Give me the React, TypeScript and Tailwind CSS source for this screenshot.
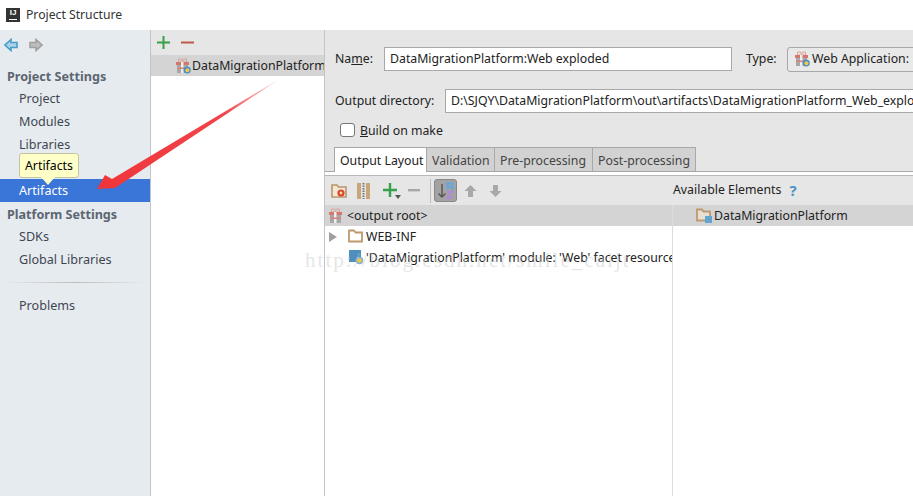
import { ReactNode } from "react";

function GiftIcon({ badge = false }: { badge?: boolean }) {
  return (
    <svg width="16" height="16" viewBox="0 0 16 16" className="shrink-0">
      <path d="M3.5 1h3l1 2.5 1-2.5h3v3h-8z" fill="none" stroke="#d9a49c" strokeWidth="1" />
      <rect x="1" y="4" width="13" height="3" fill="#d4776c" />
      <rect x="2" y="7" width="11" height="8" fill="#a8a8a8" />
      <rect x="6" y="4" width="2.5" height="11" fill="#eeeeee" />
      <rect x="2" y="9.5" width="11" height="1.5" fill="#d8827a" />
      {badge && <circle cx="12.2" cy="12" r="3.6" fill="#4a90c8" />}
      {badge && <circle cx="12.4" cy="12.2" r="2" fill="#f4c842" />}
    </svg>
  );
}

function FolderIcon({ filled = false }: { filled?: boolean }) {
  return (
    <svg width="16" height="15" viewBox="0 0 16 15" className="shrink-0">
      <path d="M1 1.5h5l1.5 2H14v9H1z" fill={filled ? "#e6dfd3" : "#fff"} stroke="#bd9a6e" strokeWidth="1.8" />
      {filled && <rect x="9" y="8" width="7" height="7" fill="#62a3cf" />}
    </svg>
  );
}

function NavItem({ children, active = false }: { children: ReactNode; active?: boolean }) {
  return (
    <div className={`h-[23px] pl-[19px] leading-[23px] ${active ? "bg-[#3a75d8] text-white" : "text-[#3f4650]"}`}>
      {children}
    </div>
  );
}

function Tab({ children, active = false, width }: { children: ReactNode; active?: boolean; width: string }) {
  return (
    <div
      className={`h-[25px] shrink-0 border border-[#a8a8a8] pl-[5px] leading-[26px] ${width} ${
        active ? "relative z-10 border-b-0 bg-white text-[#222]" : "-ml-px bg-[#d2d2d2] text-[#444]"
      }`}
    >
      {children}
    </div>
  );
}

export default function App() {
  return (
    <div className="relative h-[496px] w-[913px] overflow-hidden bg-white font-['Noto_Sans','Open_Sans',sans-serif] text-[12.3px] text-[#222]">
      {/* title bar */}
      <div className="flex h-[30px] items-center gap-[6px] pl-[6px] text-[#333]">
        <div className="flex h-[14px] w-[14px] flex-col items-center bg-[#333] font-['Liberation_Sans',sans-serif] text-[8px] font-bold leading-[10px] text-white">
          IJ
          <div className="mt-[1px] h-px w-[8px] bg-white" />
        </div>
        <span className="text-[12.2px]">Project Structure</span>
      </div>

      <div className="flex h-[466px]">
        {/* sidebar */}
        <div className="w-[151px] shrink-0 border-r border-[#c4c4c4] bg-[#e6ebf0] text-[12.6px]">
          <div className="flex h-[30px] items-center gap-[11px] pl-[4px]">
            <svg width="14" height="14" viewBox="0 0 14 14">
              <path d="M7 1.5 1 7l6 5.5V9.5h6v-5H7z" fill="#a9d3ea" stroke="#4b9ac6" strokeWidth="1.6" />
            </svg>
            <svg width="14" height="14" viewBox="0 0 14 14">
              <path d="M7 1.5 13 7l-6 5.5V9.5H1v-5h6z" fill="#bdbdbd" stroke="#a0a0a0" strokeWidth="1.6" />
            </svg>
          </div>
          <div className="h-[24px] pl-[7px] font-bold leading-[33px] text-[#5c6670]">Project Settings</div>
          <div className="h-[3px]" />
          <NavItem>Project</NavItem>
          <NavItem>Modules</NavItem>
          <NavItem>Libraries</NavItem>
          <div className="h-[23px]" />
          <NavItem active>Artifacts</NavItem>
          <div className="h-[23px] pl-[7px] font-bold leading-[25px] text-[#5c6670]">Platform Settings</div>
          <NavItem>SDKs</NavItem>
          <NavItem>Global Libraries</NavItem>
          <div className="mx-[4px] mt-[11px] mb-[11px] h-px bg-gradient-to-r from-[#e6ebf0] via-[#bcbcbc] to-[#e6ebf0]" />
          <NavItem>Problems</NavItem>
        </div>

        {/* artifact list */}
        <div className="w-[174px] shrink-0 border-r border-[#c4c4c4] bg-white">
          <div className="flex h-[25px] items-center gap-[11px] bg-[#e6e6e6] pl-[6px]">
            <svg width="13" height="13" viewBox="0 0 13 13">
              <path d="M6.5 0v13M0 6.5h13" stroke="#37a04a" strokeWidth="2" />
            </svg>
            <svg width="13" height="13" viewBox="0 0 13 13">
              <path d="M0 6.5h13" stroke="#c0584c" strokeWidth="2" />
            </svg>
          </div>
          <div className="flex h-[21px] items-center gap-[1px] overflow-hidden whitespace-nowrap bg-[#d4d4d4] pl-[24px]">
            <GiftIcon badge />
            <span className="pt-[2px]">DataMigrationPlatform</span>
          </div>
        </div>

        {/* detail panel */}
        <div className="flex min-w-0 flex-1 flex-col bg-[#e6e6e6]">
          <div className="flex h-[58px] shrink-0 items-center pl-[10px]">
            <span className="w-[49px] shrink-0">
              Na<span className="underline">m</span>e:
            </span>
            <div className="h-[24px] w-[348px] shrink-0 border border-[#a8a8a8] bg-white pl-[5px] leading-[22px]">
              DataMigrationPlatform:Web exploded
            </div>
            <span className="ml-[14px] w-[41px] shrink-0">Type:</span>
            <div className="flex h-[25px] w-[140px] shrink-0 items-center gap-[2px] overflow-hidden rounded-[3px] border border-[#a8a8a8] bg-[#e9e9e9] pl-[6px] whitespace-nowrap">
              <GiftIcon badge />
              <span>Web Application:</span>
            </div>
          </div>
          <div className="mt-[1px] flex h-[24px] shrink-0 items-center pl-[10px]">
            <span className="w-[110px] shrink-0">Output directory:</span>
            <div className="h-[24px] w-[480px] shrink-0 overflow-hidden border border-[#a8a8a8] bg-white pl-[5px] leading-[22px] whitespace-nowrap">
              D:\SJQY\DataMigrationPlatform\out\artifacts\DataMigrationPlatform_Web_exploded
            </div>
          </div>
          <div className="flex h-[34px] shrink-0 items-center gap-[5px] pl-[15px]">
            <div className="h-[14px] w-[15px] rounded-[3px] border border-[#777] bg-white" />
            <span className="pt-[2px]">
              <span className="underline">B</span>uild on make
            </span>
          </div>
          <div className="flex h-[25px] shrink-0 pl-[9px]">
            <Tab active width="w-[93px]">
              Output Layout
            </Tab>
            <Tab width="w-[69px]">Validation</Tab>
            <Tab width="w-[99px]">Pre-processing</Tab>
            <Tab width="w-[104px]">Post-processing</Tab>
          </div>
          <div className="-mt-px h-[4px] shrink-0 border-t border-[#a8a8a8] bg-white" />

          <div className="flex h-[30px] shrink-0 items-center border-t border-[#b8b8b8] pl-[6px]">
            <svg width="16" height="16" viewBox="0 0 16 16" className="shrink-0">
              <path d="M1 2h5l1.5 2H15v10H1z" fill="#f2e6d4" stroke="#b9966b" strokeWidth="1.6" />
              <circle cx="10" cy="10" r="3.6" fill="#d8452f" />
              <circle cx="10" cy="10" r="1.4" fill="#f7d9a8" />
            </svg>
            <svg width="13" height="16" viewBox="0 0 13 16" className="ml-[10px] shrink-0">
              <rect x="0" y="0" width="13" height="16" fill="#c9a57a" />
              <rect x="4" y="0" width="5" height="16" fill="#e6e6e6" />
              <path d="M6.5 0v16" stroke="#777" strokeWidth="2" strokeDasharray="1.5 1" />
            </svg>
            <div className="relative ml-[13px] h-[15px] w-[20px] shrink-0">
              <svg width="14" height="14" viewBox="0 0 14 14">
                <path d="M7 0v14M0 7h14" stroke="#37a04a" strokeWidth="2.4" />
              </svg>
              <svg width="6" height="4" viewBox="0 0 6 4" className="absolute right-[2px] bottom-[-1px]">
                <path d="M0 0h6L3 4z" fill="#555" />
              </svg>
            </div>
            <svg width="12" height="3" viewBox="0 0 12 3" className="ml-[5px] shrink-0">
              <rect width="12" height="2.4" fill="#a8a8a8" />
            </svg>
            <div className="ml-[10px] h-[24px] w-px shrink-0 bg-[#bdbdbd]" />
            <div className="ml-[3px] flex h-[23px] w-[23px] shrink-0 items-center justify-center rounded-[3px] border border-[#888] bg-[#a3a3a3]">
              <svg width="19" height="19" viewBox="0 0 19 19">
                <path d="M6 3v13M2.5 12.5 6 16l3.5-3.5" fill="none" stroke="#555" strokeWidth="1.4" />
                <path d="M11.5 9V2.5h5V9M11.5 6h5" fill="none" stroke="#62a8e0" strokeWidth="1.8" />
                <path d="M11 11h5.5l-5.5 6h5.5" fill="none" stroke="#b08ad6" strokeWidth="1.8" />
              </svg>
            </div>
            <svg width="13" height="14" viewBox="0 0 13 14" className="ml-[7px] shrink-0">
              <path d="M6.5 1 12.5 7H9v6H4V7H.5z" fill="#a8a8a8" />
            </svg>
            <svg width="13" height="14" viewBox="0 0 13 14" className="ml-[12px] shrink-0">
              <path d="M6.5 13 12.5 7H9V1H4v6H.5z" fill="#a8a8a8" />
            </svg>
            <span className="ml-[171px] shrink-0">Available Elements</span>
            <span className="ml-[8px] text-[15px] font-bold text-[#4d93c4]">?</span>
          </div>

          <div className="flex min-h-0 flex-1">
            <div className="w-[348px] shrink-0 border-r border-[#dcdcdc] bg-white">
              <div className="flex h-[21px] items-center gap-[3px] bg-[#d4d4d4] pl-[3px]">
                <GiftIcon />
                <span className="pt-[2px]">&lt;output root&gt;</span>
              </div>
              <div className="flex h-[21px] items-center whitespace-nowrap pl-[4px]">
                <svg width="8" height="10" viewBox="0 0 8 10">
                  <path d="M0 0l8 5-8 5z" fill="#a0a0a0" />
                </svg>
                <span className="ml-[11px]">
                  <FolderIcon />
                </span>
                <span className="ml-[2px] pt-[2px]">WEB-INF</span>
              </div>
              <div className="flex h-[21px] items-center overflow-hidden whitespace-nowrap pl-[24px]">
                <svg width="15" height="15" viewBox="0 0 15 15" className="shrink-0">
                  <rect width="12" height="12" fill="#4f8fbf" />
                  <circle cx="10.5" cy="10.5" r="3.8" fill="#7fb3d5" />
                  <circle cx="10.5" cy="10.5" r="2.2" fill="#f4c842" />
                </svg>
                <span className="ml-[2px] pt-[2px]">'DataMigrationPlatform' module: 'Web' facet resources</span>
              </div>
            </div>
            <div className="flex-1 bg-white">
              <div className="flex h-[21px] items-center gap-[2px] bg-[#d4d4d4] pl-[23px] whitespace-nowrap">
                <FolderIcon filled />
                <span className="pt-[2px]">DataMigrationPlatform</span>
              </div>
            </div>
          </div>
        </div>
      </div>

      {/* hover tooltip */}
      <div className="absolute top-[153px] left-[19px] h-[25px] w-[60px] rounded-[3px] border border-[#c4c4a0] bg-[#ffffc8] pl-[5px] text-[12.3px] leading-[23px] text-black">
        Artifacts
      </div>
      <svg width="14" height="8" viewBox="0 0 14 8" className="absolute top-[177px] left-[41px]">
        <path d="M0 0h14L7 8z" fill="#ffffc8" />
      </svg>

      {/* annotation arrow */}
      <svg width="913" height="496" viewBox="0 0 913 496" className="absolute top-0 left-0">
        <defs>
          <linearGradient id="arrowFade" x1="98" y1="189" x2="278" y2="80" gradientUnits="userSpaceOnUse">
            <stop offset="0" stopColor="#f0353a" />
            <stop offset="0.7" stopColor="#f0454a" />
            <stop offset="1" stopColor="#fbd0d0" />
          </linearGradient>
        </defs>
        <path d="M97 189 L105 175 L112 179 L278 80 L118 186 L115 188 Z" fill="url(#arrowFade)" />
      </svg>

      {/* blog watermark */}
      <div className="pointer-events-none absolute top-[245px] left-[305px] font-['Liberation_Serif',serif] text-[21px] tracking-[2.05px] whitespace-nowrap text-[#ccc]/50">
        http://blog.csdn.net/smile_caijt
      </div>
    </div>
  );
}
